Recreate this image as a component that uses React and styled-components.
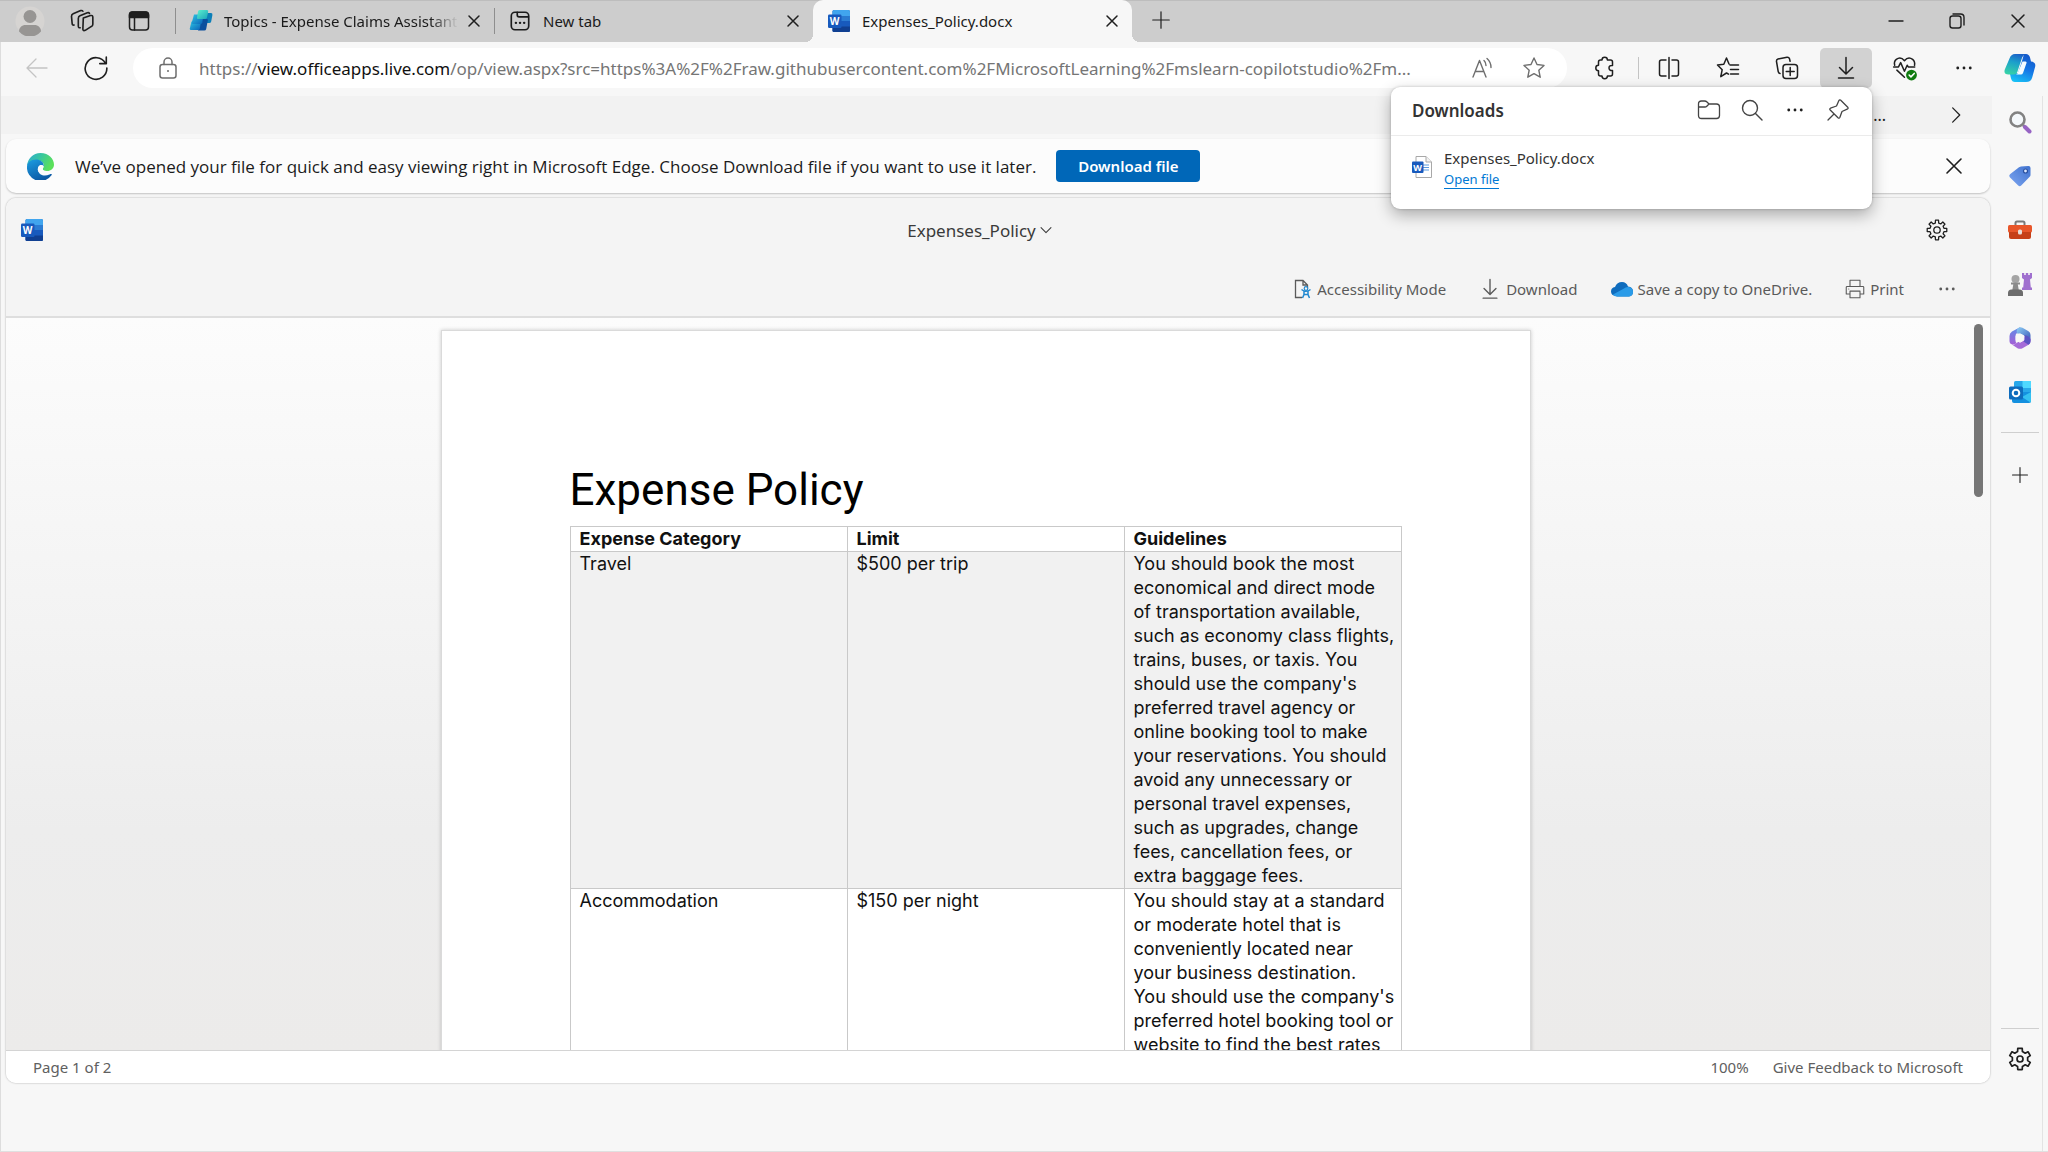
import React from "react";
import styled, { createGlobalStyle, css } from "styled-components";

const ui = `"Noto Sans", "Open Sans", sans-serif`;
const doc = `Inter, "Open Sans", sans-serif`;

const GlobalStyle = createGlobalStyle`
  *, *::before, *::after { box-sizing: border-box; }
  body { margin: 0; background: #f7f7f7; color: #1b1b1b; font-family: ${ui}; font-size: 16px; }
  button { font: inherit; color: inherit; border: 0; padding: 0; background: none; cursor: pointer; }
  a { color: inherit; text-decoration: none; }
  h1, h2, p { margin: 0; }
  svg { display: block; flex: none; }
`;

/* ---------- icons ---------- */

const Glyph = ({ size = 24, width = 1.5, children, ...rest }) => (
  <svg width={size} height={size} viewBox="0 0 24 24" fill="none" stroke="currentColor"
    strokeWidth={width} strokeLinecap="round" strokeLinejoin="round" aria-hidden="true" {...rest}>
    {children}
  </svg>
);

const Avatar = () => (
  <svg width="30" height="30" viewBox="0 0 30 30" aria-hidden="true">
    <circle cx="15" cy="15" r="14.5" fill="#d6d4d2" />
    <circle cx="15" cy="10.5" r="6.5" fill="#979593" />
    <path d="M4 25.5c0-4 3-6.500 6.500-6.500h9c3.500 0 6.500 2.500 6.500 6.500a14.500 14.500 0 0 1-22 0z" fill="#979593" />
  </svg>
);
const Workspaces = () => (
  <Glyph size={26} width={1.5}>
    <path d="M13.200 9.300 19.800 7q2.200-.6 2.200 1.600v6.300q0 1.500-1.300 2.100l-5.700 3.600q-2 1-2.200-1z" />
    <path d="M10.300 18.200q-1.700.4-1.700-1.700V9.600q0-1.800 1.500-2.500l6.800-2.700q1.500-.4 2 .6" />
    <path d="M6.200 16.200q-1.700.4-1.800-1.500l-.6-6.400q0-1.800 1.500-2.400l7-3q1.500-.4 2 .6" transform="translate(-1.5 -.5)" />
  </Glyph>
);
const TabActions = () => (
  <Glyph size={24}>
    <rect x="2.5" y="3" width="19" height="18" rx="3" />
    <path d="M2.500 8.500V6q0-3 3-3h13q3 0 3 3v2.500z" fill="currentColor" />
    <path d="M7.500 9v12" />
  </Glyph>
);
const Cross = ({ size = 24, width = 1.5 }) => (
  <Glyph size={size} width={width}><path d="M6 6l12 12M18 6 6 18" /></Glyph>
);
const Plus = ({ size = 24, width = 1.3 }) => (
  <Glyph size={size} width={width}><path d="M12 3v18M3 12h18" /></Glyph>
);
const NewTabIcon = () => (
  <Glyph size={22} width={1.8}>
    <rect x="2.5" y="2.5" width="19" height="19" rx="4" />
    <path d="M9 2.500v3q0 2 2 2h10" />
    <path d="M7.500 14h.1M12 14h.1M16.500 14h.1" strokeWidth="2.6" />
  </Glyph>
);
const CopilotStudio = () => (
  <svg width="24" height="24" viewBox="0 0 24 24" aria-hidden="true">
    <defs>
      <linearGradient id="cs1" x1="0" y1="0" x2="1" y2="1"><stop stopColor="#5cf0cf" /><stop offset="1" stopColor="#1aa5b8" /></linearGradient>
      <linearGradient id="cs2" x1="0" y1="0" x2="1" y2="1"><stop stopColor="#2cc4e2" /><stop offset="1" stopColor="#0a62b8" /></linearGradient>
    </defs>
    <path d="M18 4h4q1.800 0 1.400 2l-1.200 6.500q-.3 1.500-2 1.500H12V9z" fill="#0c7fb8" />
    <path d="M11 10h7q1 0 .8 1.200l-1.600 8.800q-.3 1.500-2 1.500H9z" fill="#0b4f9e" />
    <path d="M2.500 12.500h9.500l-1.200 7q-.3 1.500-2 1.500H2q-1.500 0-1.200-1.500z" fill="url(#cs2)" />
    <path d="M5 5.500h9.500l-1.200 8q-.3 1.500-2 1.500H4q-1.500 0-1.200-1.500z" fill="url(#cs2)" />
    <path d="M10.500 1H18q1.500 0 1.200 1.500l-1.200 6q-.3 1.500-2 1.500H9q-1.300 0-1-1.500l1-6q.2-1.500 1.500-1.500z" fill="url(#cs1)" />
  </svg>
);
const WordLogo = ({ size = 22 }) => (
  <svg width={size} height={size} viewBox="0 0 22 22" aria-hidden="true">
    <rect x="4.5" y="0" width="17.5" height="22" rx="1.5" fill="#185abd" />
    <path d="M6 0h14.500q1.500 0 1.500 1.500V6H4.500V1.500Q4.500 0 6 0z" fill="#41a5ee" />
    <path d="M4.500 6H22v5H4.500z" fill="#2b7cd3" />
    <path d="M4.500 16.500H22v4q0 1.500-1.500 1.500H6q-1.500 0-1.500-1.500z" fill="#103f91" />
    <rect x="0" y="4.5" width="13.5" height="13.5" rx="1.2" fill="#185abd" />
    <text x="6.7" y="15" textAnchor="middle" fontFamily="Open Sans" fontWeight="700" fontSize="10" fill="#fff">W</text>
  </svg>
);
const WordFile = () => (
  <svg width="20" height="22" viewBox="0 0 20 22" aria-hidden="true">
    <path d="M4 .5h10L19.500 6v15.500H4z" fill="#fff" stroke="#a8a8a8" />
    <path d="M14 .5V6h5.500" fill="#f2f2f2" stroke="#a8a8a8" />
    <path d="M11 9h6M11 11.500h6M11 14h6" stroke="#5b9be0" />
    <rect x="0" y="5.5" width="11.5" height="11.5" rx="1" fill="#185abd" />
    <text x="5.7" y="14.5" textAnchor="middle" fontFamily="Open Sans" fontWeight="700" fontSize="9" fill="#fff">W</text>
  </svg>
);
const Minimize = () => <Glyph width={1.4}><path d="M5 12h14" /></Glyph>;
const Restore = () => (
  <Glyph width={1.4}><rect x="5" y="7" width="11" height="12" rx="2.5" /><path d="M8 5h7.500q3.500 0 3.500 3.500V16" /></Glyph>
);
const BackArrow = () => <Glyph width={1.3}><path d="M22 12H2.500M11 3l-9 9 9 9" /></Glyph>;
const Reload = () => (
  <Glyph size={26} width={1.5}><path d="M20.700 7.500A10 10 0 1 0 22 12M21.500 2v6h-6" /></Glyph>
);
const Lock = () => (
  <Glyph size={24} width={1.5}>
    <rect x="4" y="8.5" width="16" height="13.5" rx="2.5" /><path d="M8 8.500V6a4 4 0 0 1 8 0v2.500" />
    <circle cx="12" cy="15" r="1" fill="currentColor" stroke="none" />
  </Glyph>
);
const ReadAloud = () => (
  <Glyph width={1.4}>
    <path d="M3 21 9.500 4.500 16 21M5.300 15.500h8.500M14 4.500q2 1.800 2 5M17 2.500q4 3.500 4 9" />
  </Glyph>
);
const Star = () => (
  <Glyph width={1.4}><path d="m12 2 3 6.500 7 .9-5.200 4.800 1.400 7L12 17.700l-6.200 3.500 1.400-7L2 9.400l7-.9z" /></Glyph>
);
const Puzzle = () => (
  <Glyph width={1.5}>
    <path d="M9 4a2.700 2.700 0 0 1 5.400 0h3.100q2 0 2 2v3.500c-2-.3-3.500.7-3.500 2.500s1.500 2.800 3.500 2.500V18q0 2-2 2h-3.100a2.700 2.700 0 0 1-5.400 0H7.500q-2 0-2-2v-3.300a2.700 2.700 0 0 1 0-5.400V6q0-2 2-2z" />
  </Glyph>
);
const SplitScreen = () => (
  <Glyph width={1.5}>
    <path d="M9 4H4.500Q2.500 4 2.500 6v12q0 2 2 2H9M15 4h4.500q2 0 2 2v12q0 2-2 2H15M12 1.500v21" />
  </Glyph>
);
const Favorites = () => (
  <Glyph width={1.5}>
    <path d="M13 8 10.500 2 7.800 8.300 1.500 9l4.700 4.700-1.400 7L10.500 17l2 1.200M14 9h8.500M14.500 13.500h8M14.500 18h8" />
  </Glyph>
);
const Collections = () => (
  <Glyph width={1.5}>
    <rect x="8" y="8.5" width="14.5" height="14" rx="3" />
    <path d="M15.200 11.500v8M11.200 15.500h8M5 17.500q-1.500-.3-1.800-2L1.500 5.500Q1.200 3.500 3 3l9-1.800q2-.2 2.500 1.500l.6 2.500" />
  </Glyph>
);
const DownloadArrow = ({ size = 24 }) => (
  <Glyph size={size} width={1.5}><path d="M12 1.500v16M5.500 11.500l6.500 6.500 6.500-6.500M4.500 22h15" /></Glyph>
);
const HeartPulse = () => (
  <Glyph size={26} width={1.4}>
    <path d="M2.500 9.500q-1-3.500 1.500-5.500 4-3 7.500 1.300Q15 1 19 4q2.500 2 1.800 5.500M1.500 11H6l2-4 3.500 8 2.500-5.500 1 1.500h6M4.500 14l7 6.500" />
    <circle cx="18" cy="18.5" r="5" fill="#107c10" stroke="none" />
    <path d="m15.800 18.500 1.700 1.700 3-3.200" stroke="#fff" />
  </Glyph>
);
const Dots = ({ size = 24 }) => (
  <Glyph size={size}><g fill="currentColor" stroke="none"><circle cx="4.5" cy="12" r="1.7" /><circle cx="12" cy="12" r="1.7" /><circle cx="19.5" cy="12" r="1.7" /></g></Glyph>
);
const Copilot = () => (
  <svg width="32" height="30" viewBox="0 0 32 30" aria-hidden="true">
    <defs>
      <linearGradient id="cp1" x1=".6" y1="0" x2=".3" y2="1"><stop stopColor="#1c62c8" /><stop offset=".4" stopColor="#1b9fcb" /><stop offset="1" stopColor="#36d2a8" /></linearGradient>
      <linearGradient id="cp2" x1=".7" y1="0" x2=".3" y2="1"><stop stopColor="#1457c8" /><stop offset=".5" stopColor="#1577e6" /><stop offset="1" stopColor="#18bff5" /></linearGradient>
    </defs>
    <path d="M20 1h2q3 0 4 3.500L27 8.500q5 .5 4.200 5l-3 11Q27 29 22 29H11q-3 0-4-3.500L6 21l8-1 4-12z" fill="url(#cp2)" />
    <path d="M22 1H11Q7 1 5.500 5.500L.8 16.500Q-.7 21.500 4.500 21.500H10q2.500 0 3.300-2.500l4-12Q18.500 2 22 1z" fill="url(#cp1)" />
    <path d="M18.500 8.500h3q1.500 0 1 1.500l-3.500 10q-.6 1.500-2 1.500h-5q1.500-.5 2.200-2.500z" fill="#f4fbff" />
  </svg>
);
const Chevron = ({ size = 24, turn = 0, width = 1.5 }) => (
  <Glyph size={size} width={width}><path d="M8 3.500 16.500 12 8 20.500" transform={`rotate(${turn} 12 12)`} /></Glyph>
);
const Folder = () => (
  <Glyph width={1.3}>
    <path d="M1.500 6q0-3 3-3h3q1.500 0 2.500 1l2 2h7.500q3 0 3 3v8.500q0 3-3 3h-15q-3 0-3-3zM1.500 9H8q1 0 1.800-.8L12 6" />
  </Glyph>
);
const Search = () => <Glyph width={1.4}><circle cx="10" cy="10" r="7.5" /><path d="m15.500 15.500 6.500 6.500" /></Glyph>;
const Pin = () => (
  <Glyph width={1.3}><path d="m14.500 2 7.500 7.500q.5 1-.8 1.700L16 13.500l-2.200 6q-.7 1.200-1.800.3L4.200 12q-1-1 .3-1.800l6-2.200L12.800 2.800q.6-1.300 1.700-.8zM8 16l-6 6" /></Glyph>
);
const EdgeLogo = () => (
  <svg width="27" height="27" viewBox="0 0 27 27" aria-hidden="true">
    <defs>
      <linearGradient id="eg1" x1="0" y1="0" x2="1" y2=".4"><stop stopColor="#2fa9d4" /><stop offset=".5" stopColor="#37c6a0" /><stop offset="1" stopColor="#5be05a" /></linearGradient>
      <linearGradient id="eg2" x1="0" y1="0" x2=".5" y2="1"><stop stopColor="#1b9de2" /><stop offset="1" stopColor="#0c59a4" /></linearGradient>
    </defs>
    <path d="M0 13.500A13.500 13.500 0 0 1 13.500 0C22 0 27 6 27 11.500c0 4-3 6.500-7 6.500-3.500 0-5-1.300-4-3 2.500-4-1-8-6-7.500C4.500 8 .5 11 0 13.500z" fill="url(#eg1)" />
    <path d="M0 13.500C.3 9.500 4 6.500 9 6.500c5 0 8.500 3.500 7.500 7-2-3.500-6.500-.5-5.500 4 1 4.300 6 6.500 11.500 4 2-.8 2.800-.3 2 .8A13.500 13.500 0 0 1 0 13.500z" fill="url(#eg2)" />
    <path d="M11 17.500c-1-4.500 3.500-7.500 5.500-4 .3 1.500-1.300 2-.7 3.200.8 1.400 3 1.500 5.700 1.100-4.500 3-9.500 3.200-10.500-.3z" fill="#fcfcfc" />
  </svg>
);
const GearTeeth = ({ size = 24, teeth = 8, hole = 3.5, width = 1.4 }) => {
  const step = (Math.PI * 2) / teeth;
  const at = (r, a) => `${(12 + r * Math.sin(a)).toFixed(2)} ${(12 - r * Math.cos(a)).toFixed(2)}`;
  const points = [];
  for (let i = 0; i < teeth; i += 1) {
    const a = i * step;
    points.push(at(7.8, a - step * 0.3), at(10.8, a - step * 0.2), at(10.8, a + step * 0.2), at(7.8, a + step * 0.3));
  }
  return <Glyph size={size} width={width}><path d={`M${points.join("L")}Z`} /><circle cx="12" cy="12" r={hole} /></Glyph>;
};
const AccessIcon = () => (
  <svg width="18" height="20" viewBox="0 0 18 20" fill="none" aria-hidden="true">
    <path d="M8 18.500H1.500v-17H9L13.500 6v3M9 1.500V6h4.500" stroke="#5a5a5a" strokeWidth="1.3" />
    <circle cx="12" cy="9.5" r="1.8" stroke="#2188d0" strokeWidth="1.2" />
    <path d="M7.500 10.500q4.500 3.500 9 0M10 12.500v3L8.500 19M14 12.500v3l1.500 3.500M10 15.500h4" stroke="#2188d0" strokeWidth="1.5" />
  </svg>
);
const Cloud = () => (
  <svg width="22" height="15" viewBox="0 0 22 15" aria-hidden="true">
    <path d="M5 14q-5-.5-5-4.500 0-4 4-4.500 2-5 7-5 4.500 0 6 4.500Q22 5 22 9.500 22 14 18 14.500H6z" fill="#0f6cbd" />
    <path d="M2 12.500 13 6.500q2-2 4.500-1.500Q22 5.500 22 10q-.2 4-4 4.500H5.500Q3 14.500 2 12.500z" fill="#2a9be8" />
  </svg>
);
const Printer = () => (
  <Glyph size={20} width={1.3}>
    <path d="M6 9V1.500h12V9M6 18H1.500v-8q0-1 1-1h19q1 0 1 1v8H18M6 14.500h12v8H6zM4.500 12h.1" />
  </Glyph>
);
const SideSearch = () => (
  <svg width="24" height="24" viewBox="0 0 24 24" fill="none" aria-hidden="true">
    <circle cx="9.5" cy="9.5" r="7" fill="#f4f8fb" stroke="#828282" strokeWidth="2.6" />
    <path d="m15 15 2.500 2.500" stroke="#828282" strokeWidth="2.6" /><path d="m17 17 4.500 4.500" stroke="#9764c4" strokeWidth="4" strokeLinecap="round" />
  </svg>
);
const Tag = () => (
  <svg width="24" height="24" viewBox="0 0 24 24" aria-hidden="true">
    <defs><linearGradient id="tg" x1="1" y1="0" x2="0" y2="1"><stop stopColor="#3f72cf" /><stop offset="1" stopColor="#7ea6f0" /></linearGradient></defs>
    <path d="M13 2.500 20.500 2q2 0 2 2v7q0 1-.8 1.800l-8.500 8.800q-1.500 1.500-3 0L1.800 13.200q-1.300-1.500.2-3l9-7z" fill="url(#tg)" />
    <circle cx="17.5" cy="7" r="2" fill="#dbe8ff" stroke="#2a50a0" strokeWidth="1.2" />
  </svg>
);
const Toolbox = () => (
  <svg width="24" height="24" viewBox="0 0 24 24" aria-hidden="true">
    <path d="M7.500 8V5q0-1.500 1.500-1.500h6q1.500 0 1.500 1.500v3" fill="none" stroke="#7a7a7a" strokeWidth="2" />
    <rect x="0" y="7" width="24" height="7.5" rx="1.5" fill="#e8562a" /><path d="M1 14h22v5q0 2-2 2H3q-2 0-2-2z" fill="#c63f17" />
    <rect x="10" y="11.5" width="4" height="5" rx="1.5" fill="#e8ded9" />
  </svg>
);
const Games = () => (
  <svg width="24" height="24" viewBox="0 0 24 24" aria-hidden="true">
    <path d="M14 1h2.200v2h1.600V1h2.400v2h1.600V1H24v5l-2 1.500.8 8H24V18H14v-2.500h1.200l.8-8L14 6z" fill="#a070cf" />
    <circle cx="7.5" cy="7" r="4" fill="#a5a5a5" /><path d="M3 10.500h9v2H9.800l1 5.500H4.300l1-5.500H3z" fill="#8b8b8b" />
    <path d="M0 24v-3q0-3.500 3.500-3.500h8q3.500 0 3.500 3.500v3z" fill="#6d6d6d" />
  </svg>
);
const M365 = () => (
  <svg width="24" height="24" viewBox="0 0 24 24" aria-hidden="true">
    <defs>
      <linearGradient id="ma" x1="0" y1="0" x2="0" y2="1"><stop stopColor="#5b8de8" /><stop offset="1" stopColor="#a45fd6" /></linearGradient>
      <linearGradient id="mb" x1="0" y1="0" x2="1" y2="1"><stop stopColor="#8fd0f5" /><stop offset="1" stopColor="#3a55b8" /></linearGradient>
    </defs>
    <path d="M12.500 1 4 5.500Q1.500 7 1.500 10v5q0 3 3 3.500 2.500 0 4-1.500-1-.8-1-2.500V10q0-2 1.500-3z" fill="url(#ma)" />
    <path d="M10 2.300Q12 .5 14.500 1.800l6 3.400Q22.500 6.500 22.500 9v6q-.5-2-2.500-3l-5-3q-3-2-6-1.500Q8 4 10 2.300z" fill="url(#mb)" />
    <path d="M22.500 13v2q0 2.500-2 3.700l-6 3.500q-2.500 1.300-5 0l-6-4Q6 19.500 8.500 17l6-3.500q2-1.300 2-3.500 5 .5 6 3z" fill="#a56bd8" />
    <path d="M16.500 9q5.500 1 6 5v2q-.5 2-2 2.700l-5-3.200q1.500-1.500 1-6.500z" fill="#5c53c4" />
    <path d="m12 7.800 3.800 2.100v4.300L12 16.300l-3.800-2.100V9.900z" fill="#f7f7f7" stroke="#f7f7f7" strokeLinejoin="round" />
  </svg>
);
const Outlook = () => (
  <svg width="24" height="24" viewBox="0 0 24 24" aria-hidden="true">
    <rect x="6" y="1" width="17" height="13" rx="1.5" fill="#28a8ea" /><path d="M14.500 1H23v7h-8.500z" fill="#50d9ff" />
    <path d="M4 12h19v9q0 2-2 2H6q-2 0-2-2z" fill="#1490df" /><path d="M23 12v9q0 1-.6 1.500L14 17z" fill="#35c1f1" />
    <rect x="1" y="6.5" width="14" height="13" rx="1.5" fill="#0f6cbd" /><circle cx="8" cy="13" r="3.3" fill="none" stroke="#fff" strokeWidth="2" />
  </svg>
);

/* ---------- shell ---------- */

const Shell = styled.div`
  display: flex; flex-direction: column; height: 100vh; min-height: 480px;
  border-bottom: 1px solid #e0e0e0; overflow: hidden;
`;

const IconButton = styled.button`
  display: flex; align-items: center; justify-content: center;
  width: ${(p) => p.$w || 52}px; height: ${(p) => p.$h || 40}px; flex: none;
  border-radius: 5px; color: ${(p) => p.$color || "#1f1f1f"};
  background: ${(p) => (p.$pressed ? "#d2d2d2" : "transparent")};
`;

const TabStrip = styled.header`
  display: flex; flex: none; height: 42px; background: #cdcdcd; box-shadow: inset 0 1px #bdbdbd;
`;
const StripStart = styled.div`
  display: flex; align-items: center; justify-content: flex-end; width: 175px; padding-right: 8px; gap: 1px;
`;
const StripEnd = styled.div`
  display: flex; align-items: center; margin-left: auto;
`;
const Tabs = styled.div`
  display: flex; min-width: 0;
`;
const Tab = styled.div`
  position: relative; display: flex; align-items: center; width: 319px; padding: 0 8px 0 14px; gap: 4px;
  ${(p) => p.$divider && css`
    &::before { content: ""; position: absolute; left: 0; top: 8px; height: 26px; border-left: 1px solid #8e8e8e; }
  `}
  ${(p) => p.$active && css`
    border-radius: 10px 10px 0 0; background: #f7f7f7;
    &::before, &::after {
      content: ""; position: absolute; bottom: 0; width: 8px; height: 8px;
    }
    &::before { left: -8px; background: radial-gradient(circle at 0 0, transparent 8px, #f7f7f7 8px); }
    &::after { right: -8px; background: radial-gradient(circle at 100% 0, transparent 8px, #f7f7f7 8px); }
  `}
`;
const TabLabel = styled.button`
  display: flex; align-items: center; gap: 11px; flex: 1; min-width: 0; height: 100%; text-align: left; font-size: 15px;
`;
const TabIcon = styled.span`
  display: flex; justify-content: center; width: 24px; flex: none;
`;
const TabText = styled.span`
  flex: 1; min-width: 0; overflow: hidden; white-space: nowrap;
  ${(p) => p.$fade && css`mask-image: linear-gradient(90deg, #000 88%, transparent);`}
`;

const Toolbar = styled.nav`
  position: relative; z-index: 5; display: flex; align-items: center; flex: none; height: 54px;
  padding: 0 5px 2px 10px; gap: 7px; border-left: 1px solid #ddd;
`;
const Address = styled.div`
  display: flex; align-items: center; flex: 1; min-width: 0; height: 40px; margin: 0 5px 0 4px;
  padding: 0 7px 0 9px; border-radius: 20px; background: #fff; color: #757575;
`;
const Url = styled.div`
  flex: 1; min-width: 0; margin-left: 5px; overflow: hidden; white-space: nowrap; font-size: 17px; outline: 0;
  b { font-weight: 400; color: #111; }
`;
const Rule = styled.span`
  width: 1px; height: 22px; margin-right: -3px; background: #c4c4c4;
`;
const DownloadWrap = styled.div`
  position: relative;
`;

const Popup = styled.section`
  position: absolute; top: 39px; right: 0; width: 481px; height: 122px; border-radius: 9px;
  background: #fff; box-shadow: 0 6px 16px rgba(0, 0, 0, 0.3), 0 0 3px rgba(0, 0, 0, 0.2);
`;
const PopupHead = styled.div`
  display: flex; align-items: center; height: 49px; padding: 0 13px 2px 21px; border-bottom: 1px solid #ebebeb;
  color: #333;
  h2 { flex: 1; font-size: 17px; font-weight: 600; }
`;
const PopupFile = styled.div`
  display: flex; gap: 12px; padding: 10px 21px;
  svg { margin-top: 10px; }
  p { font-size: 15px; line-height: 24px; color: #333; }
`;
const OpenLink = styled.a`
  display: block; width: fit-content; border-bottom: 1px solid #0078d4; color: #0078d4; font-size: 13px; line-height: 18px;
`;

const Body = styled.div`
  display: flex; flex: 1; min-height: 0;
`;
const Main = styled.main`
  display: flex; flex-direction: column; flex: 1; min-width: 0; padding: 0 2px 68px 5px; border-left: 1px solid #ddd;
`;
const FavoritesBar = styled.div`
  display: flex; align-items: center; justify-content: flex-end; flex: none; height: 38px; margin: 0 -2px 5px -5px;
  padding-right: 10px; gap: 44px; background: #f2f2f2;
`;

const InfoBar = styled.section`
  display: flex; align-items: center; flex: none; height: 54px; padding: 0 10px 0 21px; border-radius: 10px;
  background: #fcfcfc; box-shadow: 0 1px 2px rgba(0, 0, 0, 0.22);
  p { margin-left: 21px; font-family: "Open Sans", sans-serif; font-size: 17px; white-space: nowrap; }
`;
const PrimaryButton = styled.button`
  width: 144px; height: 32px; margin: 0 auto 0 20px; border-radius: 4px; background: #0067b8; color: #fff;
  font-size: 15px; font-weight: 600;
`;

const Viewer = styled.section`
  display: flex; flex-direction: column; flex: 1; min-height: 0; margin-top: 5px; border-radius: 10px;
  overflow: hidden; background: #fff; box-shadow: 0 0 2px rgba(0, 0, 0, 0.35);
`;
const ViewerHead = styled.div`
  flex: none; background: #f4f4f4; border-bottom: 2px solid #dedede;
`;
const TitleRow = styled.div`
  display: grid; grid-template-columns: 1fr auto 1fr; align-items: center; height: 64px; padding: 0 27px 0 15px;
  > :last-child { justify-self: end; }
`;
const DocTitle = styled.button`
  display: flex; align-items: center; gap: 3px; margin-right: 24px; font-size: 17px; color: #3a3a3a;
`;
const Commands = styled.div`
  display: flex; align-items: center; justify-content: flex-end; height: 54px; padding-right: 33px; gap: 33px;
`;
const Command = styled.button`
  display: flex; align-items: center; gap: 5px; color: #5a5a5a; font-size: 15px;
`;
const Canvas = styled.div`
  display: flex; flex: 1; min-height: 0; background: linear-gradient(#fcfcfc, #ededed 70%, #ecebea);
`;
const Pages = styled.div`
  display: flex; justify-content: center; align-items: flex-start; flex: 1; min-width: 0; padding-top: 12px; overflow: hidden;
`;
const Page = styled.article`
  width: 1090px; max-width: 100%; padding: 131px 128px 80px; border: 1px solid #dadada;
  background: #fff; box-shadow: 0 0 4px rgba(0, 0, 0, 0.2); color: #111; font-family: ${doc};
  h1 { font: 400 44px/56px Roboto, "Open Sans", sans-serif; color: #000; }
`;
const Gutter = styled.div`
  width: 25px; padding: 6px 7px 6px 9px;
`;
const Thumb = styled.div`
  width: 9px; height: 173px; border-radius: 5px; background: #767676;
`;
const PolicyTable = styled.table`
  width: 100%; margin-top: 8px; border-collapse: collapse; table-layout: fixed; font-size: 18px; line-height: 24px;
  th, td { padding: 0 0 0 9px; border: 1px solid #c9c9c9; text-align: left; vertical-align: top; white-space: pre-line; }
  th { font-weight: 700; }
`;
const PolicyRow = styled.tr`
  background: ${(p) => (p.$shaded ? "#f1f1f1" : "#fff")};
`;
const StatusBar = styled.footer`
  display: flex; align-items: center; flex: none; height: 33px; padding: 0 27px; gap: 24px;
  border-top: 1px solid #d4d4d4; background: #fff; color: #606060; font-size: 15px;
  :first-child { margin-right: auto; }
`;

const SideBar = styled.aside`
  display: flex; flex-direction: column; align-items: center; flex: none; width: 51px; margin-right: 5px;
  padding: 6px 0 72px 6px; gap: 14px; border-right: 1px solid #e3e3e3;
  hr { width: 38px; margin: 6px 0 8px; border: 0; border-top: 1px solid #cfcfcf; }
  hr:last-of-type { margin: auto 0 -4px; }
`;

const rows = [
  {
    category: "Travel",
    limit: "$500 per trip",
    shaded: true,
    text: `You should book the most
economical and direct mode
of transportation available,
such as economy class flights,
trains, buses, or taxis. You
should use the company's
preferred travel agency or
online booking tool to make
your reservations. You should
avoid any unnecessary or
personal travel expenses,
such as upgrades, change
fees, cancellation fees, or
extra baggage fees.`,
  },
  {
    category: "Accommodation",
    limit: "$150 per night",
    text: `You should stay at a standard
or moderate hotel that is
conveniently located near
your business destination.
You should use the company's
preferred hotel booking tool or
website to find the best rates`,
  },
];

const tabs = [
  { label: "Topics - Expense Claims Assistant", icon: <CopilotStudio />, fade: true, divider: true },
  { label: "New tab", icon: <NewTabIcon />, divider: true },
  { label: "Expenses_Policy.docx", icon: <WordLogo />, active: true },
];

const sideApps = [
  ["Search", SideSearch], ["Shopping", Tag], ["Tools", Toolbox],
  ["Games", Games], ["Microsoft 365", M365], ["Outlook", Outlook],
];

const DownloadsPopup = () => (
  <Popup aria-label="Downloads">
    <PopupHead>
      <h2>Downloads</h2>
      <IconButton $w={43} $color="#444" aria-label="Open downloads folder"><Folder /></IconButton>
      <IconButton $w={43} $color="#444" aria-label="Search downloads"><Search /></IconButton>
      <IconButton $w={43} aria-label="More options"><Dots size={20} /></IconButton>
      <IconButton $w={43} $color="#444" aria-label="Pin downloads"><Pin /></IconButton>
    </PopupHead>
    <PopupFile>
      <WordFile />
      <div>
        <p>Expenses_Policy.docx</p>
        <OpenLink href="#open">Open file</OpenLink>
      </div>
    </PopupFile>
  </Popup>
);

export default function App() {
  return (
    <>
      <GlobalStyle />
      <Shell>
        <TabStrip>
          <StripStart>
            <IconButton $w={46} aria-label="Profile"><Avatar /></IconButton>
            <IconButton $w={56} aria-label="Workspaces"><Workspaces /></IconButton>
            <IconButton $w={56} aria-label="Tab actions"><TabActions /></IconButton>
          </StripStart>
          <Tabs>
            {tabs.map((t) => (
              <Tab key={t.label} $active={t.active} $divider={t.divider}>
                <TabLabel>
                  <TabIcon>{t.icon}</TabIcon>
                  <TabText $fade={t.fade}>{t.label}</TabText>
                </TabLabel>
                <IconButton $w={24} $h={24} aria-label={`Close ${t.label}`}><Cross size={20} width={1.8} /></IconButton>
              </Tab>
            ))}
          </Tabs>
          <IconButton $w={58} aria-label="New tab"><Plus size={22} /></IconButton>
          <StripEnd>
            <IconButton $w={61} aria-label="Minimize"><Minimize /></IconButton>
            <IconButton $w={61} aria-label="Restore"><Restore /></IconButton>
            <IconButton $w={61} aria-label="Close window"><Cross /></IconButton>
          </StripEnd>
        </TabStrip>

        <Toolbar>
          <IconButton $color="#c4c4c4" aria-label="Back"><BackArrow /></IconButton>
          <IconButton aria-label="Refresh"><Reload /></IconButton>
          <Address>
            <IconButton $color="#6e6e6e" aria-label="Site information"><Lock /></IconButton>
            <Url role="textbox" aria-label="Address" contentEditable suppressContentEditableWarning spellCheck={false}>
              https://<b>view.officeapps.live.com</b>/op/view.aspx?src=https%3A%2F%2Fraw.githubusercontent.com%2FMicrosoftLearning%2Fmslearn-copilotstudio%2Fm...
            </Url>
            <IconButton $color="#6e6e6e" aria-label="Read aloud"><ReadAloud /></IconButton>
            <IconButton $color="#6e6e6e" aria-label="Add to favorites"><Star /></IconButton>
          </Address>
          <IconButton aria-label="Extensions"><Puzzle /></IconButton>
          <Rule />
          <IconButton aria-label="Split screen"><SplitScreen /></IconButton>
          <IconButton aria-label="Favorites"><Favorites /></IconButton>
          <IconButton aria-label="Collections"><Collections /></IconButton>
          <DownloadWrap>
            <IconButton $pressed aria-label="Downloads" aria-expanded="true"><DownloadArrow /></IconButton>
            <DownloadsPopup />
          </DownloadWrap>
          <IconButton aria-label="Browser essentials"><HeartPulse /></IconButton>
          <IconButton aria-label="Settings and more"><Dots size={20} /></IconButton>
          <IconButton $w={46} aria-label="Copilot"><Copilot /></IconButton>
        </Toolbar>

        <Body>
          <Main>
            <FavoritesBar>
              <span>...</span>
              <IconButton $w={52} $h={32} aria-label="More favorites"><Chevron size={20} /></IconButton>
            </FavoritesBar>

            <InfoBar>
              <EdgeLogo />
              <p>We’ve opened your file for quick and easy viewing right in Microsoft Edge. Choose Download file if you want to use it later.</p>
              <PrimaryButton>Download file</PrimaryButton>
              <IconButton aria-label="Dismiss"><Cross size={28} width={1.4} /></IconButton>
            </InfoBar>

            <Viewer>
              <ViewerHead>
                <TitleRow>
                  <WordLogo />
                  <DocTitle>Expenses_Policy <Chevron size={14} turn={90} width={1.8} /></DocTitle>
                  <IconButton $w={52} aria-label="Settings"><GearTeeth size={22} /></IconButton>
                </TitleRow>
                <Commands>
                  <Command><AccessIcon />Accessibility Mode</Command>
                  <Command><DownloadArrow size={22} />Download</Command>
                  <Command><Cloud />Save a copy to OneDrive.</Command>
                  <Command><Printer />Print</Command>
                  <Command aria-label="More commands"><Dots size={20} /></Command>
                </Commands>
              </ViewerHead>
              <Canvas>
                <Pages>
                  <Page>
                    <h1>Expense Policy</h1>
                    <PolicyTable>
                      <thead>
                        <tr><th>Expense Category</th><th>Limit</th><th>Guidelines</th></tr>
                      </thead>
                      <tbody>
                        {rows.map((r) => (
                          <PolicyRow key={r.category} $shaded={r.shaded}>
                            <td>{r.category}</td><td>{r.limit}</td><td>{r.text}</td>
                          </PolicyRow>
                        ))}
                      </tbody>
                    </PolicyTable>
                  </Page>
                </Pages>
                <Gutter><Thumb /></Gutter>
              </Canvas>
              <StatusBar>
                <span>Page 1 of 2</span>
                <span>100%</span>
                <a href="#feedback">Give Feedback to Microsoft</a>
              </StatusBar>
            </Viewer>
          </Main>

          <SideBar>
            {sideApps.map(([name, Icon]) => (
              <IconButton key={name} $w={40} aria-label={name}><Icon /></IconButton>
            ))}
            <hr />
            <IconButton $w={40} aria-label="Customize"><Plus size={20} /></IconButton>
            <hr />
            <IconButton $w={40} aria-label="Sidebar settings"><GearTeeth size={24} teeth={6} hole={3} width={1.7} /></IconButton>
          </SideBar>
        </Body>
      </Shell>
    </>
  );
}
